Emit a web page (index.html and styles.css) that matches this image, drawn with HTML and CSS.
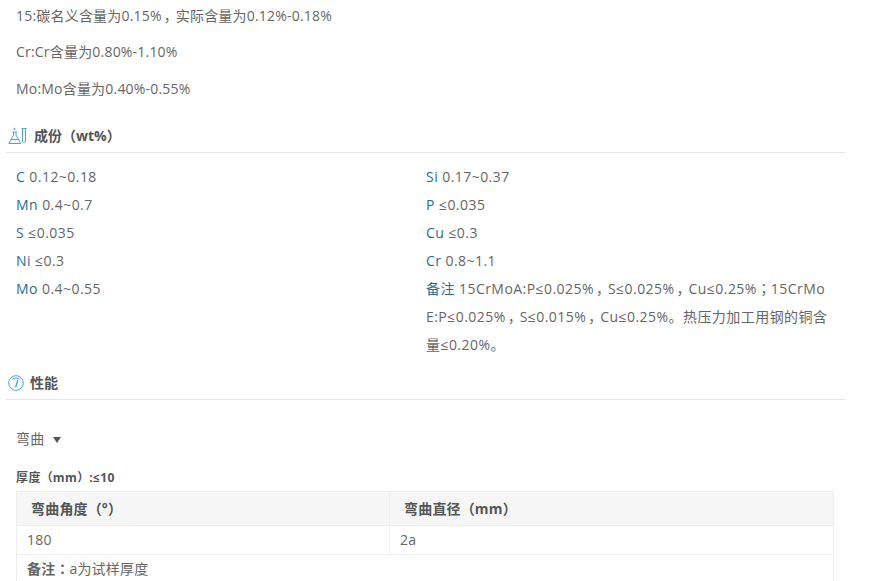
FILE: index.html
```html
<!DOCTYPE html>
<html lang="zh-CN">
<head>
<meta charset="utf-8">
<title>15CrMo</title>
<link rel="stylesheet" href="styles.css">
</head>
<body>
<main class="page">
  <section class="intro">
    <p>15:碳名义含量为0.15%<span class="cm">，</span>实际含量为0.12%-0.18%</p>
    <p>Cr:Cr含量为0.80%-1.10%</p>
    <p>Mo:Mo含量为0.40%-0.55%</p>
  </section>

  <h2 class="heading heading-comp">
    <svg class="icon" width="20" height="18" viewBox="0 0 20 18" fill="none" stroke="#4aa5dc" stroke-width="1">
      <path d="M5.500 5v3L.8 16.500h11.900L8 8V5"/>
      <path d="M4.500 5h4.500M3 12.500h7.500"/>
      <circle cx="6.500" cy="2" r=".7"/>
      <path d="M13.500 1.500h5M14.500 1.500v13a1.800 1.800 0 0 0 3 0v-13"/>
    </svg>
    <span>成份<span class="fw" lang="zh-TW">（</span>wt%<span class="fw" lang="zh-TW">）</span></span>
  </h2>
  <div class="comp">
    <div class="comp-col">
      <div class="comp-row"><span class="el">C</span> 0.12~0.18</div>
      <div class="comp-row"><span class="el">Mn</span> 0.4~0.7</div>
      <div class="comp-row"><span class="el">S</span> ≤0.035</div>
      <div class="comp-row"><span class="el">Ni</span> ≤0.3</div>
      <div class="comp-row"><span class="el">Mo</span> 0.4~0.55</div>
    </div>
    <div class="comp-col">
      <div class="comp-row"><span class="el">Si</span> 0.17~0.37</div>
      <div class="comp-row"><span class="el">P</span> ≤0.035</div>
      <div class="comp-row"><span class="el">Cu</span> ≤0.3</div>
      <div class="comp-row"><span class="el">Cr</span> 0.8~1.1</div>
      <div class="comp-note"><span class="el">备注</span> 15CrMoA:P≤0.025%<span class="cm">，</span>S≤0.025%<span class="cm">，</span>Cu≤0.25%<span class="fw" lang="zh-TW">；</span>15CrMoE:P≤0.025%<span class="cm">，</span>S≤0.015%<span class="cm">，</span>Cu≤0.25%。热压力加工用钢的铜含量≤0.20%。</div>
    </div>
  </div>

  <h2 class="heading heading-perf">
    <svg class="icon" width="16" height="16" viewBox="0 0 16 16" fill="none" stroke="#4aa5dc" stroke-width="1">
      <circle cx="8" cy="8" r="7.300"/>
      <path d="M4.500 4.500a5 5 0 0 1 7 0"/>
      <path d="M9.800 5L7.600 12.500" stroke-width="1.300"/>
    </svg>
    <span>性能</span>
  </h2>

  <div class="perf">
    <div class="dropdown">弯曲<span class="caret"></span></div>
    <div class="thick">厚度<span class="fw" lang="zh-TW">（</span>mm<span class="fw" lang="zh-TW">）</span>:≤10</div>
    <table class="data">
      <colgroup><col class="col-a"><col></colgroup>
      <thead>
        <tr><th>弯曲角度<span class="fw" lang="zh-TW">（</span>°<span class="fw" lang="zh-TW">）</span></th><th>弯曲直径<span class="fw" lang="zh-TW">（</span>mm<span class="fw" lang="zh-TW">）</span></th></tr>
      </thead>
      <tbody>
        <tr><td>180</td><td>2a</td></tr>
        <tr><td class="note-cell" colspan="2"><b>备注<span class="fw" lang="zh-TW">：</span></b>a为试样厚度</td></tr>
      </tbody>
    </table>
  </div>
</main>
</body>
</html>
```
FILE: styles.css
```css
html, body {
  margin: 0;
  padding: 0;
  background: #fff;
  overflow: hidden;
}
body {
  height: 581px;
  font-family: "Open Sans", "Noto Sans CJK SC", sans-serif;
  font-size: 14px;
  letter-spacing: .2px;
  color: #666;
}
.fw {
  font-family: "Noto Sans CJK TC", sans-serif;
  letter-spacing: 0;
  line-height: 1;
}
.cm {
  letter-spacing: 0;
  margin-left: 2px;
  margin-right: -2px;
}
.page {
  width: 839px;
  margin-left: 6px;
}
.intro {
  padding: 6px 10px 0;
}
.intro p {
  margin: 0 0 16.300px;
  line-height: 20px;
}
.heading {
  display: flex;
  align-items: center;
  gap: 6px;
  margin: 0;
  height: 26px;
  padding: 0 0 3px 2px;
  border-bottom: 1px solid #e5e5e5;
  font-size: 14px;
  line-height: 24px;
  font-weight: 700;
  letter-spacing: 0;
  color: #555;
}
.heading-comp {
  margin-top: 24.400px;
}
.heading-perf {
  margin-top: 11px;
}
.icon {
  flex: none;
}
.comp {
  display: grid;
  grid-template-columns: 410px 1fr;
  padding: 10px 10px 0;
  letter-spacing: .45px;
}
.comp-row {
  line-height: 28px;
}
.comp-note {
  line-height: 28px;
  width: 402px;
  word-break: break-all;
}
.el {
  color: #2a6f8e;
}
.perf {
  padding: 25px 11px 0 10px;
}
.dropdown {
  line-height: 28px;
  display: flex;
  align-items: center;
}
.caret {
  width: 0;
  height: 0;
  margin-left: 9px;
  margin-top: 2px;
  border-left: 4px solid transparent;
  border-right: 4px solid transparent;
  border-top: 6px solid #555;
}
.thick {
  margin-top: 16px;
  font-size: 12px;
  font-weight: 700;
  line-height: 18px;
  letter-spacing: .4px;
  color: #555;
}
.data {
  width: 818px;
  border-collapse: collapse;
  table-layout: fixed;
  margin-top: 4px;
}
.col-a {
  width: 373px;
}
.data th, .data td {
  border: 1px solid #eee;
  text-align: left;
  padding-top: 0;
  padding-bottom: 1px;
}
.data th {
  background: #f6f6f6;
  height: 32px;
  padding-left: 14px;
  padding-right: 14px;
  font-size: 14px;
  color: #555;
}
.data td {
  height: 27px;
  padding-left: 10px;
  padding-right: 10px;
}
.data .note-cell {
  padding-bottom: 3px;
}
.data b {
  font-weight: 700;
}
```
